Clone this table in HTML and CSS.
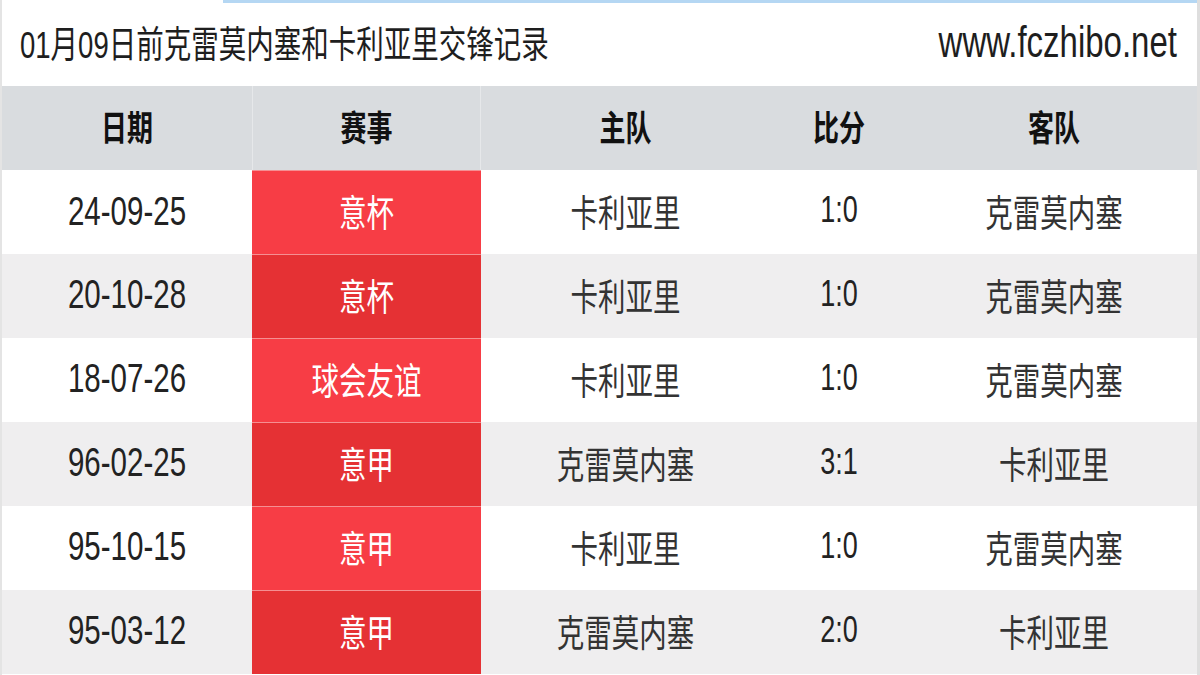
FILE: index.html
```html
<!DOCTYPE html>
<html lang="zh">
<head>
<meta charset="utf-8">
<title>交锋记录</title>
<link rel="stylesheet" href="styles.css">
</head>
<body>
<div class="page">
  <div class="topline"></div>
  <header class="titlebar">
    <span class="title t">01月09日前克雷莫内塞和卡利亚里交锋记录</span>
    <span class="site t">www.fczhibo.net</span>
  </header>
  <div class="table">
    <div class="row head">
      <div class="cell"><span class="t">日期</span></div>
      <div class="cell sep"><span class="t">赛事</span></div>
      <div class="cell"><span class="t">主队</span></div>
      <div class="cell"><span class="t">比分</span></div>
      <div class="cell"><span class="t">客队</span></div>
    </div>
    <div class="row">
      <div class="cell date"><span class="t">24-09-25</span></div>
      <div class="cell comp"><span class="t">意杯</span></div>
      <div class="cell"><span class="t">卡利亚里</span></div>
      <div class="cell score"><span class="t">1:0</span></div>
      <div class="cell"><span class="t">克雷莫内塞</span></div>
    </div>
    <div class="row alt">
      <div class="cell date"><span class="t">20-10-28</span></div>
      <div class="cell comp"><span class="t">意杯</span></div>
      <div class="cell"><span class="t">卡利亚里</span></div>
      <div class="cell score"><span class="t">1:0</span></div>
      <div class="cell"><span class="t">克雷莫内塞</span></div>
    </div>
    <div class="row">
      <div class="cell date"><span class="t">18-07-26</span></div>
      <div class="cell comp"><span class="t">球会友谊</span></div>
      <div class="cell"><span class="t">卡利亚里</span></div>
      <div class="cell score"><span class="t">1:0</span></div>
      <div class="cell"><span class="t">克雷莫内塞</span></div>
    </div>
    <div class="row alt">
      <div class="cell date"><span class="t">96-02-25</span></div>
      <div class="cell comp"><span class="t">意甲</span></div>
      <div class="cell"><span class="t">克雷莫内塞</span></div>
      <div class="cell score"><span class="t">3:1</span></div>
      <div class="cell"><span class="t">卡利亚里</span></div>
    </div>
    <div class="row">
      <div class="cell date"><span class="t">95-10-15</span></div>
      <div class="cell comp"><span class="t">意甲</span></div>
      <div class="cell"><span class="t">卡利亚里</span></div>
      <div class="cell score"><span class="t">1:0</span></div>
      <div class="cell"><span class="t">克雷莫内塞</span></div>
    </div>
    <div class="row alt">
      <div class="cell date"><span class="t">95-03-12</span></div>
      <div class="cell comp"><span class="t">意甲</span></div>
      <div class="cell"><span class="t">克雷莫内塞</span></div>
      <div class="cell score"><span class="t">2:0</span></div>
      <div class="cell"><span class="t">卡利亚里</span></div>
    </div>
  </div>
</div>
</body>
</html>
```

FILE: styles.css
```css
html, body {
  margin: 0;
  padding: 0;
  background: #ffffff;
}

.page {
  width: 1200px;
  height: 675px;
  overflow: hidden;
  position: relative;
  box-sizing: border-box;
  border-left: 2px solid #e4e4e4;
  font-family: "Liberation Sans", "Noto Sans CJK SC", sans-serif;
  color: #2a2a2a;
}

.page::after {
  content: "";
  position: absolute;
  top: 0;
  right: 0;
  bottom: 0;
  width: 3px;
  background: #dedede;
}

.topline {
  position: absolute;
  top: 0;
  left: 221px;
  right: 0;
  height: 3px;
  background: #b5d7f3;
}

.t {
  display: inline-block;
  transform: scaleY(1.35);
  white-space: nowrap;
}

.titlebar {
  height: 86px;
  display: flex;
  align-items: center;
  justify-content: space-between;
  padding: 0 23px 0 18px;
  box-sizing: border-box;
}

.title {
  font-size: 27.5px;
  color: #1e1e1e;
  margin-top: -2px;
}

.site {
  font-size: 33px;
  color: #1e1e1e;
  margin-top: -2px;
}

.table {
  display: flex;
  flex-direction: column;
}

.row {
  display: grid;
  grid-template-columns: 250px 229px 289px 138px 1fr;
  height: 84px;
  background: #ffffff;
}

.row.alt {
  background: #efeeef;
}

.row.head {
  background: #d9dcdf;
  font-weight: bold;
  color: #111;
}

.cell {
  display: flex;
  align-items: center;
  justify-content: center;
  font-size: 27.5px;
  color: #333;
  padding-bottom: 3px;
  box-sizing: border-box;
}

.head .cell {
  color: #111;
  font-size: 26px;
  padding-bottom: 5px;
}

.head .sep {
  border-left: 1px solid #e6e8ea;
  border-right: 1px solid #e6e8ea;
}

.cell.date {
  font-size: 29.5px;
  color: #222;
}

.cell.score {
  font-size: 27px;
  color: #222;
}

.cell.comp {
  background: #f73d45;
  color: #ffffff;
  border-top: 1px solid #f58f92;
}

.alt .cell.comp {
  background: #e53134;
}
```
